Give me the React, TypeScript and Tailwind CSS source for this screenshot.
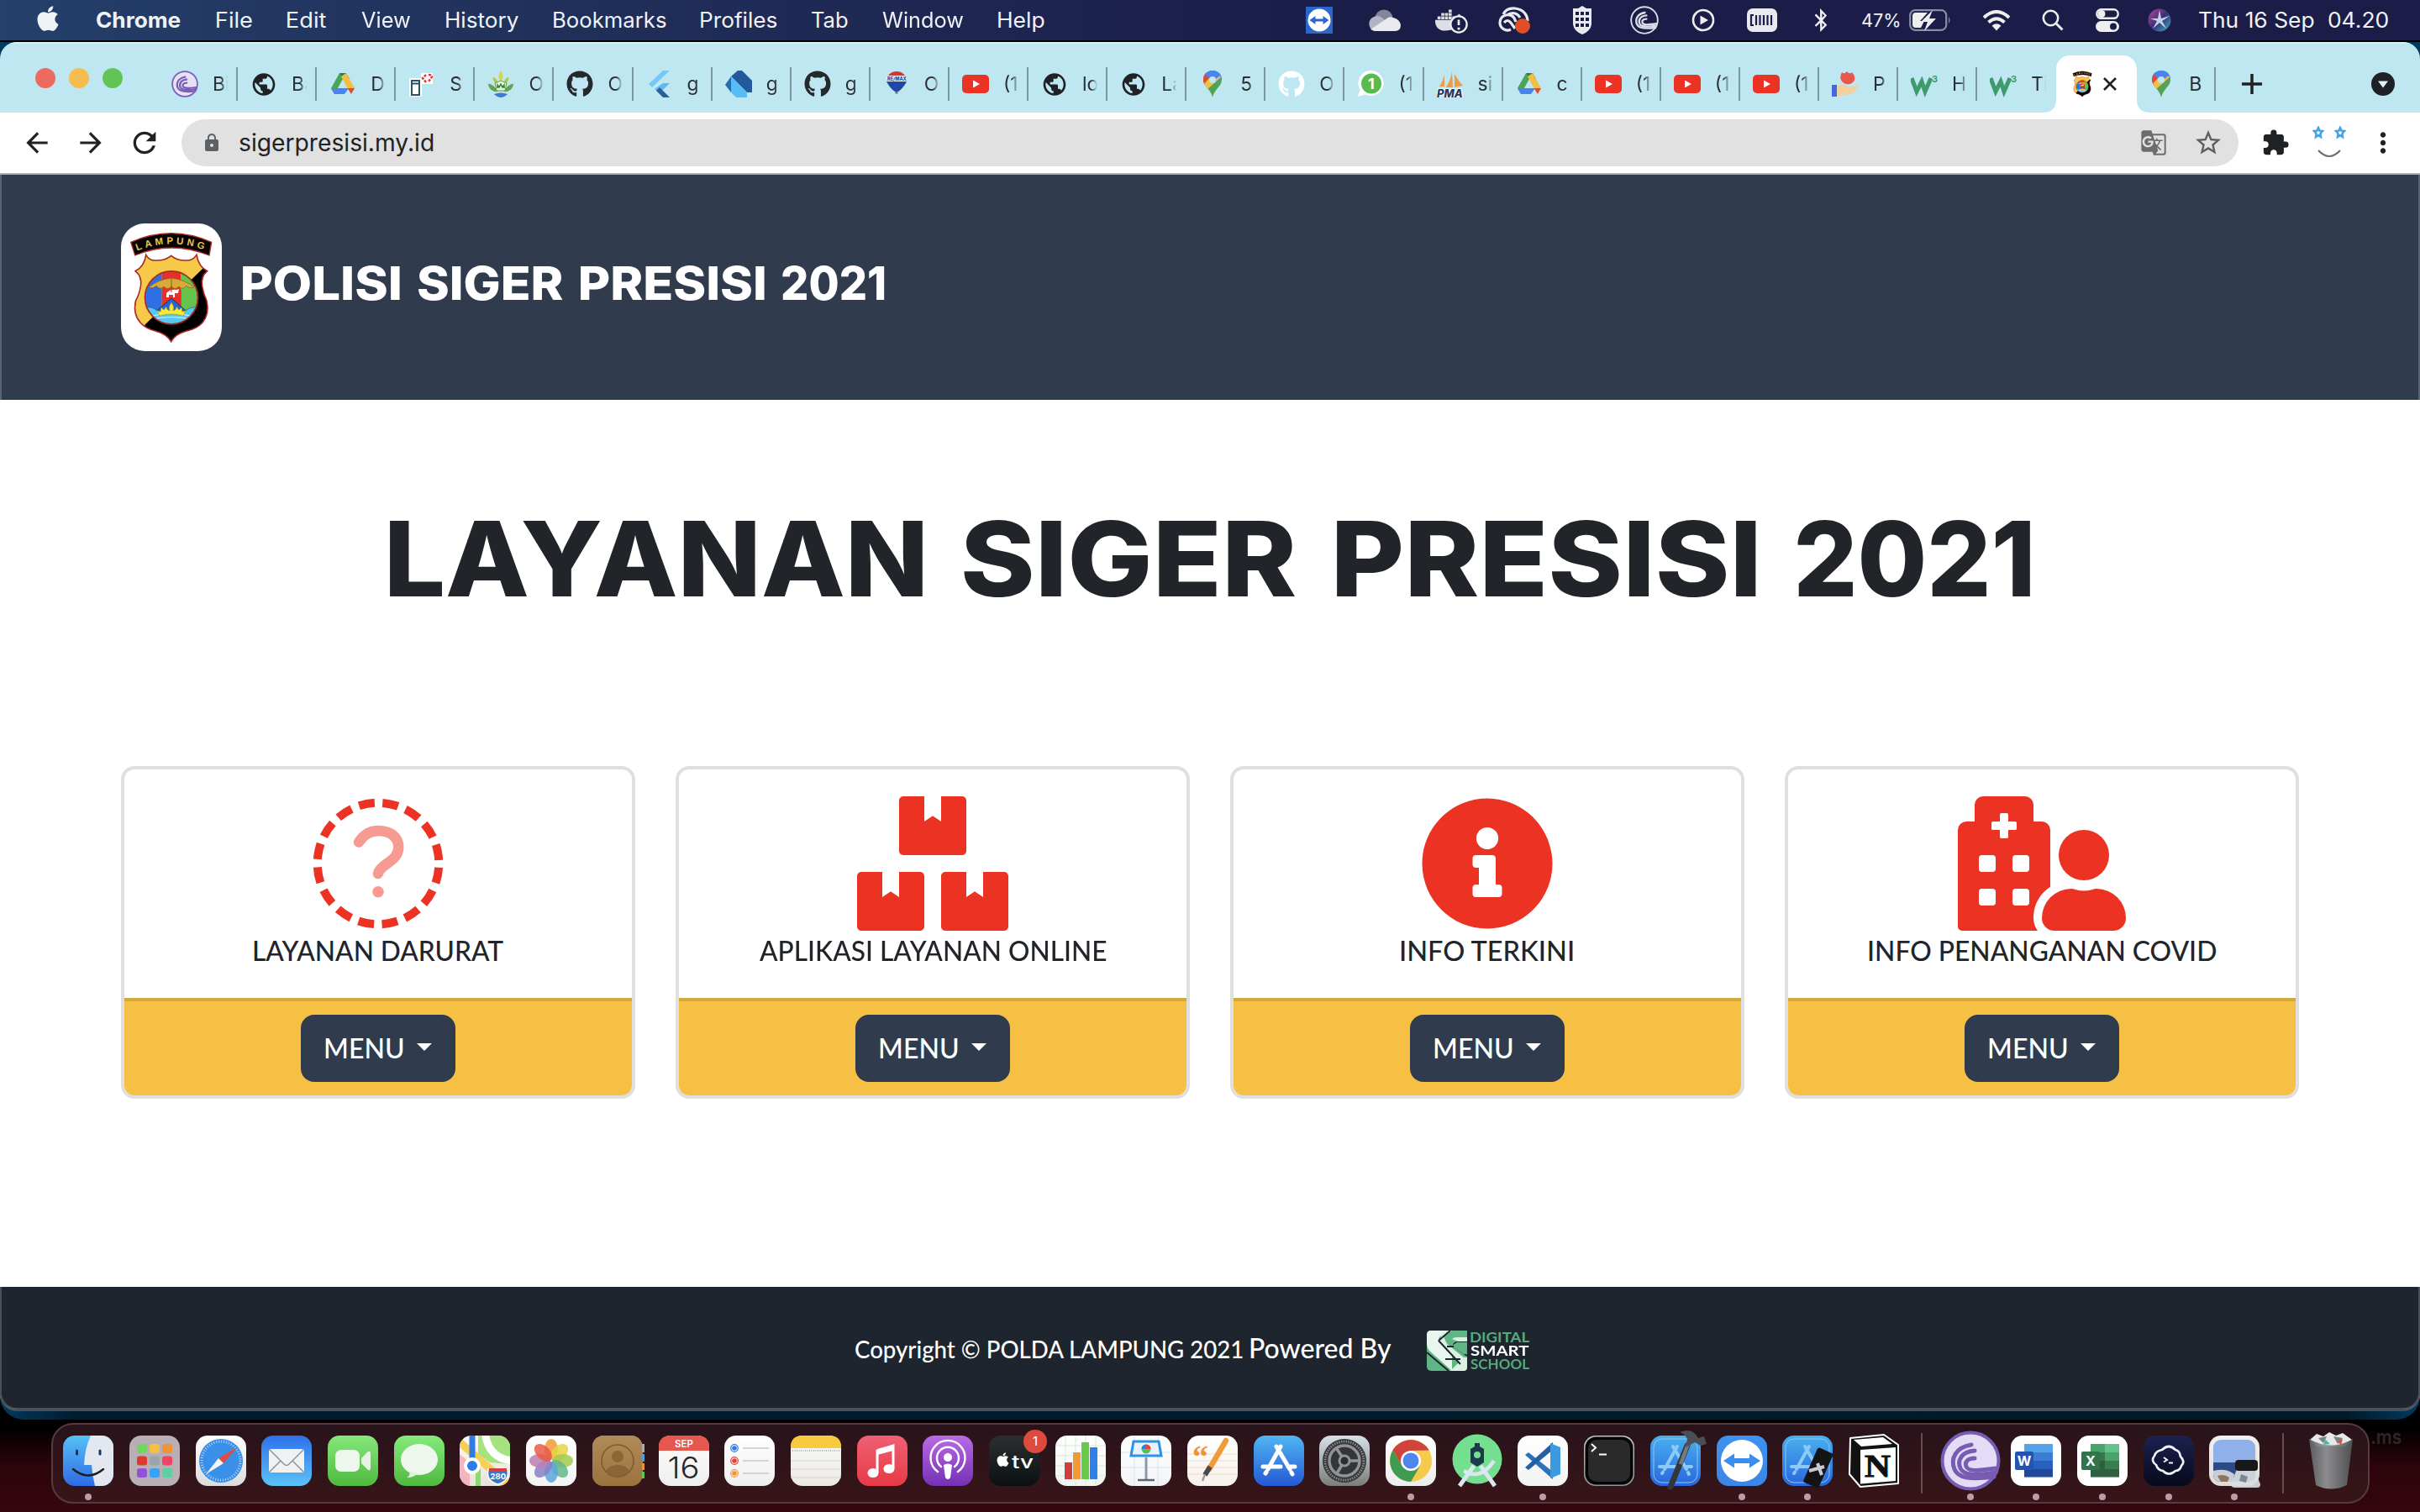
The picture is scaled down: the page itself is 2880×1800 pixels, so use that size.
import React, { useLayoutEffect, useRef } from "react";
import { FaApple, FaBluetoothB, FaBoxes, FaDocker, FaGithub, FaHospitalUser, FaInfoCircle } from "react-icons/fa";
import { MdArrowBack, MdArrowForward, MdExtension, MdGTranslate, MdLock, MdMoreVert, MdPublic, MdRefresh, MdStarBorder } from "react-icons/md";

/* Text whose inked width is fitted to an exact number of pixels. */
function Fit({ w, className = "", children }: { w: number; className?: string; children: string }) {
  const ref = useRef<HTMLSpanElement>(null);
  useLayoutEffect(() => {
    const el = ref.current;
    const ctx = document.createElement("canvas").getContext("2d");
    if (!el || !ctx) return;
    const cs = getComputedStyle(el);
    ctx.font = `${cs.fontWeight} ${cs.fontSize} ${cs.fontFamily}`;
    const m = ctx.measureText(children);
    const s = w / (m.actualBoundingBoxLeft + m.actualBoundingBoxRight);
    el.style.transform = `translateX(${m.actualBoundingBoxLeft * s}px) scaleX(${s})`;
  }, [w, children]);
  return (
    <span className={`inline-block whitespace-nowrap ${className}`} style={{ width: w }}>
      <span ref={ref} className="inline-block origin-left">{children}</span>
    </span>
  );
}

/* ---------- shared marks ---------- */
function Crest({ box = "0 0 120 152", className = "" }: { box?: string; className?: string }) {
  const shield =
    "M29.7 37.3 Q34 44.5 41 44 Q52 44.5 59.7 38.3 Q67 44.5 78 44 Q86 44 90 37.3 Q92 51 102.7 56.7 Q95 63 96.5 74 Q98 84 102 92 Q105.500 108 97 118 Q91 125 78 128 Q64 132 59.700 140.700 Q55 132 41 128 Q29 125 23 118 Q14 108 17.500 92 Q22 84 23.500 74 Q25 63 17 56.700 Q28 51 29.700 37.300 Z";
  return (
    <svg viewBox={box} className={className}>
      <defs>
        <clipPath id="sh"><path d={shield} /></clipPath>
        <clipPath id="ci"><circle cx="60" cy="88.300" r="31" /></clipPath>
        <path id="arc" d="M19 32.500 Q60 16.500 102 32.500" />
      </defs>
      <path d="M11.700 22.300 Q59.700 1 107.700 22.300 L105 38 Q59.700 20 16.700 38 Z" fill="#050303" stroke="#b3312a" strokeWidth="1.300" />
      <text fontFamily="Liberation Sans" fontWeight="700" fontSize="11.500" fill="#e8c64a" textLength="81">
        <textPath href="#arc" textLength="81">LAMPUNG</textPath>
      </text>
      <path d={shield} fill="#f7c948" />
      <path d="M97 54 L28.300 120.700 L28 145 H110 V50 Z" fill="#000" clipPath="url(#sh)" />
      <path d={shield} fill="none" stroke="#a82a24" strokeWidth="1.600" />
      <g clipPath="url(#ci)">
        <path d="M25 50h23.700v75H25z" fill="#2f6fe4" />
        <path d="M48.700 50h22.600v75H48.700z" fill="#e8302a" />
        <path d="M71.300 50H95v75H71.300z" fill="#66c44d" />
        <path d="M60 89 L38 108 H82 Z" fill="#2663d9" stroke="#123" strokeWidth=".7" />
        <path d="M25 102 Q34 97 42 103 Q60 112 78 103 Q86 97 95 102 V125 H25Z" fill="#56c8f5" stroke="#1b4d7a" strokeWidth=".6" />
        <path d="M38 110 Q60 104 82 110 M36 114 Q60 109 84 114" stroke="#fff" strokeWidth=".8" fill="none" />
      </g>
      <path d="M54 88 v-5 q5-5 12-4 l3-1 -1 5 -4 0 v5 h-2 v-3 h-5 v3z" fill="#fff" />
      <path d="M60 94 q4 5 2 10 q4-1 4-5 l3 4 3-3 1 5 4-1 -3 6 q-14-4-28 0 l-3-6 4 1 1-5 3 3 3-4 q0 4 4 5 q-2-5 2-10z" fill="#f6e93a" stroke="#9a8a16" strokeWidth=".6" />
      <path d="M60 65 Q76 67 87 76 Q80 78 78 74 Q73 80 69 75 Q64 80 60 75 Q55 80 51 75 Q46 80 42 74 Q39 78 33 76 Q44 67 60 65 Z" fill="#d9a93a" stroke="#86651a" strokeWidth=".7" />
      <path d="M60 63 V82" stroke="#86651a" strokeWidth="1" />
      <circle cx="60" cy="88.300" r="31.500" fill="none" stroke="#a82a24" strokeWidth="1.700" />
    </svg>
  );
}

const BitSwirl = ({ bg, fg, className }: { bg: string; fg: string; className: string }) => (
  <svg viewBox="0 0 72 72" className={className}>
    <circle cx="36" cy="36" r="33.500" fill={bg} stroke={fg} strokeWidth="4" />
    <g fill="none" stroke={fg} strokeWidth="5" strokeLinecap="round">
      <path d="M37 17 C18 20 12 34 17 46 C21 56 34 59 64 55" />
      <path d="M41 24 C25 25 20 36 24 45 C28 53 40 54 66 50" />
      <path d="M41 33 C32 33 29 38 31 43 C34 49 44 48 66 45" />
    </g>
  </svg>
);

/* ---------- tab favicons ---------- */
const Drive = () => (
  <svg viewBox="0 0 32 32" className="size-8">
    <path d="M12 3 L16 10 L6 28 L2 21 Z" fill="#4aa557" />
    <path d="M12 3 H20 L24 10 L16 10 Z" fill="#2e7d3c" />
    <path d="M20 3 L30 21 H21.500 L14 7 Z" fill="#f3be42" />
    <path d="M2 21 H23 L18 28 H6 Z" fill="#4c84ee" />
    <path d="M21.500 21 H30 L26 28 Z" fill="#df4a3c" />
  </svg>
);
const Globe = () => <MdPublic className="size-[33px] text-[#1f2124]" />;
const Git = () => <FaGithub className="size-8 text-[#24292e]" />;
const GitWhite = () => <FaGithub className="size-8 text-white" />;
const Tube = () => (
  <svg viewBox="0 0 32 32" className="size-8"><rect y="5" width="32" height="22" rx="5" fill="#ea3323" /><path d="M13 11.500 L21 16 L13 20.500Z" fill="#fff" /></svg>
);
const Pin = () => (
  <svg viewBox="0 0 32 32" className="size-8">
    <defs><clipPath id="pinc"><path d="M16 0 C9 0 5 5 5 11 C5 19 14 22 16 32 C18 22 27 19 27 11 C27 5 23 0 16 0Z" /></clipPath></defs>
    <g clipPath="url(#pinc)">
      <rect width="32" height="32" fill="#52a455" />
      <path d="M0 0 H32 V6 L20 14 L12 8 L5 4Z" fill="#4b84ee" />
      <path d="M0 4 L7 4 L13 10 L5 20 L0 20Z" fill="#df4a3c" />
      <path d="M4 18 L20 0 L26 8 L9 23Z" fill="#f6be43" />
      <path d="M7 3 L16 0 L32 0 L20 10 L12 9Z" fill="#4b84ee" />
    </g>
    <circle cx="16" cy="11" r="4" fill="#bfe7f1" />
  </svg>
);
const W3 = () => (
  <svg viewBox="0 0 32 32" className="size-8">
    <path d="M1 9 L7 25 L13 13 L17 25 L24 9" fill="none" stroke="#3f9a6d" strokeWidth="5" />
    <text x="25" y="14" fontSize="11" fontFamily="Inter" fontWeight="700" fill="#3f9a6d">3</text>
  </svg>
);
const DbIcon = () => (
  <svg viewBox="0 0 32 32" className="size-8">
    <rect x="1" y="9" width="15" height="22" fill="#fff" />
    <path d="M4 12 h9 v17 h-9z M4 15.500h9" fill="#fff" stroke="#2b5460" strokeWidth="2" />
    <rect x="15" y="3" width="14" height="13" fill="#fff" />
    <path d="M21 5 l-4 4 4 5 M24 5 q6 0 3 4 l-3 4" fill="none" stroke="#e0302a" strokeWidth="2.400" strokeDasharray="3 1.500" />
  </svg>
);
const Lotus = () => (
  <svg viewBox="0 0 32 32" className="size-8">
    <path d="M16 0 q5 7 0 13 q-5-6 0-13z" fill="#cfd84a" />
    <g fill="#a9c94c" stroke="#dfeecb" strokeWidth=".7"><path d="M6 7q7 2 8 12q-8-4-8-12z" /><path d="M26 7q-7 2-8 12q8-4 8-12z" /></g>
    <g fill="#5da35e" stroke="#dfeecb" strokeWidth=".7"><path d="M0 15q9 1 13 11q-11 0-13-11z" /><path d="M32 15q-9 1-13 11q11 0 13-11z" /></g>
    <path d="M9 15 L16 12 L23 15 L21 24 H11Z" fill="#eef4d6" stroke="#5a9d45" />
    <path d="M12 21v-4l2 3 2-4 2 4 2-3v4" fill="none" stroke="#2e7d3c" strokeWidth="1.400" />
    <path d="M8 28q8-3 16 0q-4 4-8 4t-8-4z" fill="#3b7bd0" />
  </svg>
);
const Flutter = () => (
  <svg viewBox="0 0 32 32" className="size-8"><path d="M20 0 H28 L7 20 L3 16Z" fill="#74c8f7" /><path d="M20 15 H28 L16 27 L10 22Z" fill="#5cb9f5" /><path d="M12 24 L16 20 L28 32 H20Z" fill="#2a5f9e" /></svg>
);
const Dart = () => (
  <svg viewBox="0 0 32 32" className="size-8"><path d="M7 7 L15 0 H20 L32 12 V26 H26Z" fill="#23599b" /><path d="M7 7 L0 17 L7 26Z" fill="#2c6ab0" /><path d="M7 7 L26 26 V32 H13 L7 26Z" fill="#58bdf6" /></svg>
);
const Balloon = () => (
  <svg viewBox="0 0 32 32" className="size-8">
    <path d="M4 12a12 11 0 0 1 24 0z" fill="#d8342c" /><rect x="4" y="6" width="24" height="7" rx="3" fill="#f4f6fa" />
    <text x="5" y="12" fontSize="5.500" fontFamily="Inter" fontWeight="800" fill="#1b48a0">RE/MAX</text>
    <path d="M4 13 H28 Q24 21 18 25 H14 Q8 21 4 13Z" fill="#2048a4" /><path d="M14.500 25h3v2.500h-3z" fill="#6b7280" />
  </svg>
);
const Whats = () => (
  <svg viewBox="0 0 32 32" className="size-8">
    <path d="M17 0a15 15 0 1 1-7 28.500L1 31l2.500-8.500A15 15 0 0 1 17 0z" fill="#fff" /><circle cx="17" cy="15.500" r="12" fill="#57bb4f" />
    <text x="13" y="22" fontSize="18" fontFamily="Inter" fontWeight="700" fill="#fff">1</text>
  </svg>
);
const Pma = () => (
  <svg viewBox="0 0 32 32" className="size-8">
    <path d="M3 19 Q7 13 9 5 L9 19Z M11 20 Q17 10 18 0 L19 20Z M21 20 V4 Q27 14 31 18Z" fill="#ee9c45" />
    <text x="0" y="31.500" fontSize="13" fontFamily="Inter" fontStyle="italic" fontWeight="800" fill="#2d3263" stroke="#fff" strokeWidth="2" paintOrder="stroke">PMA</text>
  </svg>
);
const Hand = () => (
  <svg viewBox="0 0 32 32" className="size-8">
    <path d="M12 2q3 3 6-1q3 4 6 1q7 8 0 13q-6 3-11-1q-5-5-1-12z" fill="#e9564e" /><path d="M6 18 Q16 14 20 19 L31 18 Q28 28 18 29 L6 31Z" fill="#f1d0a2" /><path d="M0 17h6v14H0z" fill="#4169e4" />
  </svg>
);
const Bit = () => <BitSwirl bg="#e7e1f5" fg="#7a5fb5" className="size-8" />;

const TABS: [() => React.ReactElement, string][] = [
  [Bit, "Bi"], [Globe, "Ba"], [Drive, "D"], [DbIcon, "S"], [Lotus, "O"], [Git, "O"], [Flutter, "g"], [Dart, "g"],
  [Git, "g"], [Balloon, "O"], [Tube, "(1"], [Globe, "lo"], [Globe, "La"], [Pin, "5"], [GitWhite, "O"], [Whats, "(1"],
  [Pma, "si"], [Drive, "c"], [Tube, "(1"], [Tube, "(1"], [Tube, "(1"], [Hand, "P"], [W3, "H"], [W3, "Ti"],
];

function TabStrip() {
  return (
    <div className="flex h-[84px] shrink-0 border-t-2 border-[#d6f1f7] bg-[#bfe7f1] pt-[14px]">
      <div className="flex w-[189px] shrink-0 gap-4 pl-[42px] pt-[15px]">
        <i className="size-6 rounded-full bg-[#ed6a5e]" />
        <i className="size-6 rounded-full bg-[#f5bd4f]" />
        <i className="size-6 rounded-full bg-[#61c454]" />
      </div>
      {TABS.map(([Icon, t], i) => (
        <div key={i} className="flex h-[68px] w-[94.100px] shrink-0 items-center">
          <span className="ml-[15px] flex w-8 justify-center"><Icon /></span>
          <span className="ml-[17px] w-[18px] overflow-hidden whitespace-nowrap font-[Inter] text-[23px] text-[#2b2f33] [mask-image:linear-gradient(90deg,#000_55%,transparent)]">{t}</span>
          {i < 23 && <i className="ml-auto h-10 w-0.5 bg-[#7d979f]" />}
        </div>
      ))}
      <div className="relative flex h-[68px] w-24 shrink-0 items-center rounded-t-2xl bg-white">
        <svg viewBox="0 0 16 16" className="absolute -left-4 bottom-0 size-4"><path d="M16 0 V16 H0 Q16 16 16 0Z" fill="#fff" /></svg>
        <svg viewBox="0 0 16 16" className="absolute -right-4 bottom-0 size-4"><path d="M0 0 V16 H16 Q0 16 0 0Z" fill="#fff" /></svg>
        <Crest box="8 8 103 136" className="ml-[15px] h-8 w-8" />
        <svg viewBox="0 0 16 16" className="ml-[9px] size-4"><path d="M1 1 L15 15 M15 1 L1 15" stroke="#1f2124" strokeWidth="2.600" /></svg>
      </div>
      <div className="flex h-[68px] w-[94px] shrink-0 items-center">
        <span className="ml-[13px]"><Pin /></span>
        <span className="ml-[17px] w-[18px] font-[Inter] text-[23px] text-[#2b2f33]">B</span>
        <i className="ml-auto h-10 w-0.5 bg-[#7d979f]" />
      </div>
      <div className="flex h-[68px] grow items-center justify-between pl-[31px] pr-[30px]">
        <svg viewBox="0 0 24 24" className="size-6"><path d="M12 0 V24 M0 12 H24" stroke="#1f2124" strokeWidth="3.500" /></svg>
        <svg viewBox="0 0 28 28" className="size-7"><circle cx="14" cy="14" r="14" fill="#1f2124" /><path d="M8 10.500 H20 L14 18.500Z" fill="#dff4f9" /></svg>
      </div>
    </div>
  );
}

function Toolbar() {
  return (
    <div className="flex h-[74px] shrink-0 items-center border-b-2 border-[#acb0b3] bg-white text-[#1f2124]">
      <MdArrowBack className="ml-[25px] size-[38px]" />
      <MdArrowForward className="ml-[26px] size-[38px]" />
      <MdRefresh className="ml-[25px] size-10" />
      <div className="ml-6 flex h-14 w-[2448px] items-center rounded-full bg-[#e1e1e1]">
        <MdLock className="ml-[24px] size-6 text-[#5d6065]" />
        <span className="ml-[21px] font-[Inter] text-[28px] leading-10 text-[#202124]"><Fit w={230}>sigerpresisi.my.id</Fit></span>
        <MdGTranslate className="ml-auto size-8 text-[#6a6d70]" />
        <MdStarBorder className="ml-[31px] mr-[18px] size-[36px] text-[#5d6065]" />
      </div>
      <MdExtension className="ml-[27px] size-[34px]" />
      <svg viewBox="0 0 40 40" className="ml-[27px] size-10">
        <g fill="none" stroke="#4ba3e0" strokeWidth="2.600">
          <path d="M7 2 l1.500 3.500 3.500 .5 -2.500 3 .5 4 -3-2 -3 2 .5-4 -2.500-3 3.500-.5z" />
          <path d="M33 2 l1.500 3.500 3.500 .5 -2.500 3 .5 4 -3-2 -3 2 .5-4 -2.500-3 3.500-.5z" />
        </g>
        <path d="M7 29 Q20 43 33 29" fill="none" stroke="#6b6e72" strokeWidth="2.200" />
      </svg>
      <MdMoreVert className="ml-[25px] size-[38px]" />
    </div>
  );
}

/* ---------- macOS menu bar ---------- */
const MENUS: [string, string, number][] = [
  ["File", "w-[84px]", 42], ["Edit", "w-[88px]", 46], ["View", "w-[101px]", 58], ["History", "w-[128px]", 86], ["Bookmarks", "w-[175px]", 134],
  ["Profiles", "w-[132px]", 91], ["Tab", "w-[84px]", 43], ["Window", "w-[138px]", 96], ["Help", "w-[90px]", 55],
];

function MenuBar() {
  return (
    <div className="flex h-12 shrink-0 items-center bg-[linear-gradient(90deg,#24406b_0%,#213560_14%,#1e2a55_33%,#1b1d49_55%,#1b1c48_100%)] font-[Inter] text-[25.500px] leading-[30px] text-[#f1f2f6]">
      <FaApple className="mb-1 ml-[40px] size-[34px]" />
      <span className="ml-[41px] w-[143px] font-bold"><Fit w={100}>Chrome</Fit></span>
      {MENUS.map(([t, w, ink]) => <span key={t} className={w}><Fit w={ink}>{t}</Fit></span>)}
      <svg viewBox="0 0 32 32" className="ml-[276px] size-8"><rect width="32" height="32" fill="#2a66cc" /><circle cx="16" cy="16" r="13.500" fill="#fff" /><path d="M4.500 16 l7-5 v3.500 h9 V11 l7 5 -7 5 v-3.500 h-9 V21z" fill="#2a66cc" /></svg>
      <svg viewBox="0 0 40 26" className="ml-[41px] h-[26px] w-10"><circle cx="20" cy="11" r="10.500" fill="#83859d" /><path d="M9 26 a9 9 0 0 1-1-17 q6-3 11 2 L33 26Z" fill="#b2b3c4" /><path d="M4 24 L22 12 Q26 8 31 10 q8 2 9 9 q0 7-7 7 H9z" fill="#e9e9f0" /></svg>
      <span className="relative ml-[41px] flex h-8 w-10 items-center">
        <FaDocker className="size-9 text-[#dcdde6]" />
        <svg viewBox="0 0 24 24" className="absolute left-[17px] top-[10px] size-[22px]"><circle cx="12" cy="12" r="10.500" fill="#1b1c48" stroke="#eee" strokeWidth="2.500" /><path d="M12 6v7M12 16v3" stroke="#eee" strokeWidth="3" /></svg>
      </span>
      <svg viewBox="0 0 40 32" className="ml-[33px] h-8 w-10"><g fill="none" stroke="#e9e9f0" strokeWidth="3.200"><path d="M17 27 a9 9 0 0 1-13-8 q0-7 7-9 q9-2 12 8 M9 19 q4-5 8 0 l5 7" /><path d="M8 9 Q12 1 22 2 Q36 4 37 17 M14 9 q9-4 14 4" /></g><circle cx="31" cy="23" r="9" fill="#dd4f27" /></svg>
      <svg viewBox="0 0 28 34" className="ml-[48px] h-[34px] w-7"><path d="M3 3 H9 L14 0 L19 3 H25 V22 Q24 30 14 34 Q4 30 3 22Z" fill="#e9e9f0" /><g fill="#1b1c48"><path d="M6 7h4v4H6zM12 7h4v4h-4zM18 7h4v4h-4zM6 14h4v4H6zM12 14h4v4h-4zM18 14h4v4h-4zM6 21h4v4H6zM12 21h4v4h-4zM18 21h4v4h-4z" /></g></svg>
      <BitSwirl bg="#1b1c48" fg="#dcdde6" className="ml-[43px] size-[34px]" />
      <svg viewBox="0 0 28 28" className="ml-[39px] size-7"><circle cx="14" cy="14" r="12" fill="none" stroke="#eee" strokeWidth="2.600" /><path d="M10.500 8.500 L20 14 L10.500 19.500Z" fill="#eee" /></svg>
      <svg viewBox="0 0 36 28" className="ml-[38px] h-7 w-9"><rect width="36" height="28" rx="7" fill="#e9e9f0" /><path d="M8 8H5v12h3M11 8v12M15.500 8v12M20 8v12M24.500 8v12M29 8v12" fill="none" stroke="#1b1c48" strokeWidth="2.200" /></svg>
      <FaBluetoothB className="ml-[38px] size-[28px]" />
      <span className="ml-[35px] text-[22px]"><Fit w={45}>47%</Fit></span>
      <svg viewBox="0 0 50 26" className="ml-[11px] h-[26px] w-[50px]"><rect x="1.200" y="1.200" width="43" height="23.600" rx="6" fill="none" stroke="#8b8ca8" strokeWidth="2.200" /><path d="M8 4 H22 L13 14 H18 L14 22 H8 Q4 22 4 18 V8 Q4 4 8 4Z" fill="#eee" /><path d="M28 1 L14 15 H22 L18 26 L32 11 H24Z" fill="#eee" /><path d="M47 9 q3 4 0 8z" fill="#8b8ca8" /></svg>
      <svg viewBox="0 0 34 25" className="ml-[37px] h-[25px] w-[34px]"><path d="M2 9 Q17 -5 32 9 M7.500 14.500 Q17 6 26.500 14.500" fill="none" stroke="#eee" strokeWidth="4" /><path d="M11.500 18.500 Q17 14 22.500 18.500 L17 24.500Z" fill="#eee" /></svg>
      <svg viewBox="0 0 26 26" className="ml-[37px] size-[26px]"><circle cx="10.500" cy="10.500" r="8.700" fill="none" stroke="#eee" strokeWidth="2.600" /><path d="M17 17 L24.500 24.500" stroke="#eee" strokeWidth="3" /></svg>
      <svg viewBox="0 0 28 28" className="ml-[38px] size-7"><rect x="1.300" y="1.300" width="25.400" height="10.500" rx="5.200" fill="none" stroke="#eee" strokeWidth="2.400" /><circle cx="7" cy="6.500" r="4.500" fill="#eee" /><rect y="15" width="28" height="13" rx="6.500" fill="#eee" /><circle cx="21" cy="21.500" r="4" fill="#1b1c48" /></svg>
      <svg viewBox="0 0 28 28" className="ml-[34px] size-7"><defs><linearGradient id="siri" x1="0" y1="0" x2="1" y2="1"><stop stopColor="#b8479a" /><stop offset=".5" stopColor="#3b2f7a" /><stop offset="1" stopColor="#38b2c8" /></linearGradient></defs><circle cx="14" cy="14" r="13.500" fill="url(#siri)" /><path d="M14 2 L16 12 L26 9 L17 15 L22 24 L14 17 L6 24 L11 15 L3 12 L12 12Z" fill="#dceefa" opacity=".85" /></svg>
      <span className="ml-[33px]"><Fit w={137}>Thu 16 Sep</Fit></span>
      <span className="ml-[17px]"><Fit w={71}>04.20</Fit></span>
    </div>
  );
}

/* ---------- page ---------- */
const DashedQuestion = () => (
  <svg viewBox="0 0 160 160" className="size-40">
    <circle cx="80" cy="80" r="72.300" fill="none" stroke="#ec3323" strokeWidth="10" strokeDasharray="18.800 9.592" strokeDashoffset="-4.800" />
    <path d="M57 54.500 Q66 41 80 41 C95 41 104.300 49 104.300 60.500 C104.300 70 98 75 90 80.500 C83 85.500 80.500 89 80 92" fill="none" stroke="#f79a92" strokeWidth="12.500" strokeLinecap="round" strokeLinejoin="round" />
    <circle cx="80" cy="113.700" r="6.800" fill="#f79a92" />
  </svg>
);

const SERVICES: [string, number, React.ReactElement][] = [
  ["LAYANAN DARURAT", 297, <DashedQuestion />],
  ["APLIKASI LAYANAN ONLINE", 413, <FaBoxes className="h-40 w-[180px]" />],
  ["INFO TERKINI", 206, <FaInfoCircle className="size-40" />],
  ["INFO PENANGANAN COVID", 413, <FaHospitalUser className="h-40 w-[200px]" />],
];

function ServiceCard({ label, width, icon }: { label: string; width: number; icon: React.ReactElement }) {
  return (
    <div className="flex h-[396px] w-[612px] flex-col overflow-hidden rounded-2xl border-4 border-[#dfdfdf] bg-white">
      <div className="flex grow flex-col items-center pt-8 text-[#ec3323]">
        {icon}
        <p className="text-[32px] font-medium leading-[48px] text-[#212529]"><Fit w={width}>{label}</Fit></p>
      </div>
      <div className="flex h-[116px] items-start justify-center border-t-4 border-[#d4a93b] bg-[#f6c044] pt-4">
        <button className="flex h-20 w-[184px] items-center rounded-2xl bg-[#303c4e] pl-[29px] text-[32px] font-medium leading-[48px] text-white">
          <Fit w={93} className="mr-4 text-left">MENU</Fit>
          <svg viewBox="0 0 18 9" className="-mt-1 h-[9px] w-[18px]"><path d="M0 0 H18 L9 9Z" fill="#fff" /></svg>
        </button>
      </div>
    </div>
  );
}

function SchoolLogo() {
  return (
    <div className="flex h-12 w-[122px] gap-1">
      <svg viewBox="0 0 48 48" className="size-12">
        <rect width="48" height="48" rx="5" fill="#5fb584" />
        <path d="M5 0 H24 L14 9 L30 26 V48 L3 24 Q0 20 0 16 V5 Q0 0 5 0Z" fill="#e8f6ee" />
        <path d="M20 0 L48 0 V14 H40 L30 10 L24 16 L44 32 H48 V44 Q48 48 44 48 H28 L38 38 L14 14Z" fill="#d9f0e2" />
        <path d="M20 7 L30 0 H48 V8 H36 Q30 8 28 13 L24 16Z" fill="#5fb584" />
        <path d="M48 14 H38 Q32 14 32 18 L48 30" fill="none" stroke="#1d252e" strokeWidth="2" />
        <path d="M48 14 H36 L30 18 L44 28 L48 28Z" fill="#5fb584" />
        <path d="M14 12 L28 0 M14 12 L40 40 M22 34 H40 M0 26 L26 48 M24 19 L32 19" stroke="#1d252e" strokeWidth="2" fill="none" />
      </svg>
      <div className="flex flex-col justify-between font-[Lato] text-[17.500px] font-bold leading-4">
        <span className="text-[#55a97a]"><Fit w={70}>DIGITAL</Fit></span>
        <span className="text-white"><Fit w={70}>SMART</Fit></span>
        <span className="text-[#55a97a]"><Fit w={70}>SCHOOL</Fit></span>
      </div>
    </div>
  );
}

function Page() {
  return (
    <div className="flex grow flex-col bg-white font-[Lato,sans-serif]">
      <header className="flex h-[268px] shrink-0 items-start bg-[#303c4e] pl-36 pt-[58px]">
        <div className="h-[152px] w-[120px] shrink-0 rounded-[28px] bg-white"><Crest className="h-[152px] w-[120px]" /></div>
        <h2 className="ml-[25px] mt-[35px] flex gap-[21px] font-[Inter] text-[55px] font-extrabold leading-[72px] text-white">
          <Fit w={187}>POLISI</Fit><Fit w={173}>SIGER</Fit><Fit w={219}>PRESISI</Fit><Fit w={122}>2021</Fit>
        </h2>
      </header>
      <main className="flex h-[1056px] shrink-0 flex-col items-center pt-[117px]">
        <h1 className="flex gap-[49.500px] font-[Inter] text-[124px] font-extrabold leading-[144px] text-[#212529]">
          <Fit w={634}>LAYANAN</Fit><Fit w={394}>SIGER</Fit><Fit w={499}>PRESISI</Fit><Fit w={277}>2021</Fit>
        </h1>
        <div className="mt-[175px] flex gap-12">
          {SERVICES.map(([label, width, icon]) => <ServiceCard key={label} label={label} width={width} icon={icon} />)}
        </div>
      </main>
      <footer className="flex grow items-start bg-[#1e252e] pl-[1018px] pt-[52px] text-white">
        <p className="-mt-[3px] flex w-[680px] items-baseline text-[32px] font-medium leading-[48px]">
          <Fit w={462} className="mr-2 text-[28px]">Copyright © POLDA LAMPUNG 2021</Fit>
          <Fit w={168}>Powered By</Fit>
        </p>
        <SchoolLogo />
      </footer>
    </div>
  );
}

/* ---------- dock ---------- */
const Tile = ({ id, from, to, children }: { id: string; from: string; to: string; children?: React.ReactNode }) => (
  <svg viewBox="0 0 60 60" className="size-[60px] overflow-visible">
    <defs>
      <linearGradient id={`g${id}`} x1="0" y1="0" x2="0" y2="1"><stop stopColor={from} /><stop offset="1" stopColor={to} /></linearGradient>
      <clipPath id={`c${id}`}><rect width="60" height="60" rx="14" /></clipPath>
    </defs>
    <rect width="60" height="60" rx="14" fill={`url(#g${id})`} />
    {children}
  </svg>
);
const A = ({ c = "#fff", w = 5 }: { c?: string; w?: number }) => (
  <g stroke={c} strokeWidth={w} strokeLinecap="round" fill="none"><path d="M32 13 L17 40 M27 13 L43 40 M11 37 H32 M41 37 H49 M14 45 L15 43.500 M46 46 L45 44" /></g>
);
const PHOTO = ["#f19a37", "#e8d53f", "#a5c94c", "#63b889", "#5ea5dc", "#8880c8", "#bb7fb0", "#e85a48"];
const PAD = ["#6fd85c", "#f5c142", "#ee9433", "#da3a2f", "#9aa4ab", "#ee4561", "#9352d6", "#38a3f5", "#5cd0a4"];

const APPS: { name: string; run?: boolean; icon: React.ReactElement }[] = [
  { name: "Finder", run: true, icon: (
    <Tile id="fi" from="#55c0f7" to="#2f6be6"><g clipPath="url(#cfi)"><path d="M33 0 Q26 14 25 35 H34 Q35 48 38 60 H60 V0Z" fill="#e3e8f0" /></g><path d="M16.500 18v4M44 18v4" stroke="#16365f" strokeWidth="3" strokeLinecap="round" /><path d="M12 40 Q30 55 48 40" fill="none" stroke="#1c1c22" strokeWidth="2.400" strokeLinecap="round" /></Tile>) },
  { name: "Launchpad", icon: (
    <Tile id="lp" from="#b8aeb4" to="#b9b0b6">{PAD.map((c, i) => <rect key={i} x={9 + (i % 3) * 15} y={10 + Math.floor(i / 3) * 14.500} width="12" height="11" rx="3" fill={c} />)}</Tile>) },
  { name: "Safari", icon: (
    <Tile id="sf" from="#fff" to="#dcdcdc"><circle cx="30" cy="30" r="26" fill="#3a8fe8" /><circle cx="30" cy="30" r="23" fill="none" stroke="#cfe6fb" strokeWidth="3" strokeDasharray=".8 2.200" /><path d="M49 14 L33 33 L27 27Z" fill="#e8493c" /><path d="M12 46 L27 27 L33 33Z" fill="#f4f4f4" /></Tile>) },
  { name: "Mail", icon: (
    <Tile id="ml" from="#3070ea" to="#5bc3f8"><rect x="9" y="16" width="42" height="28" rx="3" fill="#f0f1f3" /><path d="M10 17 L27 34 Q30 37 33 34 L50 17 M10 43 L23 30 M50 43 L37 30" fill="none" stroke="#8f959c" strokeWidth="1.500" /></Tile>) },
  { name: "FaceTime", icon: (
    <Tile id="ft" from="#85e87a" to="#4fb940"><rect x="9" y="17" width="29" height="26" rx="7" fill="#eef7ee" /><path d="M40 27 L48 19 Q51 18 51 21 V39 Q51 42 48 41 L40 33Z" fill="#e4f2e4" /></Tile>) },
  { name: "Messages", icon: (
    <Tile id="ms" from="#86ea7c" to="#4fb940"><ellipse cx="30" cy="28.500" rx="22" ry="18.500" fill="#eef7ee" /><path d="M18 42 Q20 47 15 50 Q24 50 28 45Z" fill="#dff0df" /></Tile>) },
  { name: "Maps", icon: (
    <Tile id="mp" from="#fbf8f0" to="#e8e4da"><g clipPath="url(#cmp)"><path d="M22 0H60V34L36 32L22 22Z" fill="#a6e37e" /><path d="M30 -4 Q34 28 64 30" fill="none" stroke="#fff" strokeWidth="9" /><path d="M0 8 L62 62" stroke="#f6cf55" strokeWidth="9" /><path d="M0 22 L12 32 V60 H0Z" fill="#f4b5c2" /><path d="M22 36 V60" stroke="#8ed870" strokeWidth="6" /><path d="M15 0 V36" stroke="#2f7ce8" strokeWidth="7" /></g><circle cx="15" cy="36" r="8" fill="#2f7ce8" stroke="#fff" strokeWidth="4" /><path d="M34 40 H57 Q60 54 45.500 58 Q31 54 34 40Z" fill="#3b77c8" stroke="#fff" strokeWidth="1.500" /><path d="M35 39 h21 v4 H35z" fill="#d83b3b" /><text x="36.500" y="52" fontSize="9.500" fontFamily="Inter" fontWeight="700" fill="#fff">280</text></Tile>) },
  { name: "Photos", icon: (
    <Tile id="ph" from="#fff" to="#f3f3f3">{PHOTO.map((c, i) => <ellipse key={c} cx="30" cy="16.500" rx="8" ry="12.500" fill={c} opacity=".85" transform={`rotate(${i * 45} 30 30)`} />)}</Tile>) },
  { name: "Contacts", icon: (
    <Tile id="ct" from="#b08a58" to="#9a733f"><path d="M60 10v10" stroke="#aaa" strokeWidth="4" /><path d="M60 22v9" stroke="#4aa3e0" strokeWidth="4" /><path d="M60 33v8" stroke="#ee9433" strokeWidth="4" /><path d="M60 43v8" stroke="#62c554" strokeWidth="4" /><rect width="59" height="60" rx="13" fill="url(#gct)" /><circle cx="30" cy="30" r="19" fill="none" stroke="#7c5a2e" strokeWidth="1.500" /><circle cx="30" cy="25" r="7" fill="#8a6536" /><path d="M16 43 Q19 35 30 35 Q41 35 44 43 Q30 54 16 43Z" fill="#8a6536" /></Tile>) },
  { name: "Calendar", icon: (
    <Tile id="ca" from="#fdfdfd" to="#efefef"><path d="M0 18 V14 Q0 0 14 0 H46 Q60 0 60 14 V18Z" fill="#e5584d" /><text x="30" y="14" fontSize="11.500" textAnchor="middle" fontFamily="Inter" fontWeight="600" fill="#fff">SEP</text><text x="29.500" y="51" fontSize="36" textAnchor="middle" fontFamily="Inter" fontWeight="300" fill="#26262a" textLength="38" lengthAdjust="spacingAndGlyphs">16</text></Tile>) },
  { name: "Reminders", icon: (
    <Tile id="re" from="#fff" to="#efefef">{["#2f77ea", "#e0453c", "#ee9433"].map((c, i) => <g key={c}><circle cx="12" cy={15 + i * 15} r="4.300" fill="none" stroke={c} strokeWidth="1.200" /><circle cx="12" cy={15 + i * 15} r="2.800" fill={c} /><path d={`M22 ${15 + i * 15}h31`} stroke="#c8c8c8" strokeWidth="1.500" /></g>)}</Tile>) },
  { name: "Notes", icon: (
    <Tile id="no" from="#fbfbf9" to="#ebe9e4"><path d="M0 15 V14 Q0 0 14 0 H46 Q60 0 60 14 V15Z" fill="#f8cb3f" /><path d="M2 18h57" stroke="#999" strokeWidth="1.500" strokeDasharray="1 1.500" /><path d="M0 30h60M0 40h60M0 50h60" stroke="#d6d4cf" /></Tile>) },
  { name: "Music", icon: (
    <Tile id="mu" from="#ef6074" to="#e63a45"><path d="M24 44 V18 L43 12 V39" fill="none" stroke="#fff" strokeWidth="3" /><path d="M24 16 L43 11 V18 L24 23Z" fill="#fff" /><ellipse cx="19" cy="44.500" rx="6.500" ry="5.500" fill="#fff" /><ellipse cx="38" cy="39.500" rx="6.500" ry="5.500" fill="#fff" /></Tile>) },
  { name: "Podcasts", icon: (
    <Tile id="po" from="#ba6be6" to="#7430b4"><circle cx="30" cy="26" r="5" fill="#fff" /><path d="M25 35 Q30 32 35 35 L33 50 Q30 54 27 50Z" fill="#fff" /><path d="M22 37 A13 13 0 1 1 38 37 M18 43 A20.500 20.500 0 1 1 42 43" fill="none" stroke="#fff" strokeWidth="2.400" strokeLinecap="round" /></Tile>) },
  { name: "TV", icon: (
    <Tile id="tv" from="#2b2f30" to="#0b1012"><FaApple x="7" y="19" width="19" height="19" fill="#fff" size={19} /><text x="27" y="38.500" fontSize="21" fontFamily="Inter" fontWeight="500" fill="#fff" textLength="26" lengthAdjust="spacingAndGlyphs">tv</text><circle cx="55" cy="7" r="14" fill="#dd4a3e" /><text x="55" y="12" fontSize="15" textAnchor="middle" fontFamily="Inter" fill="#fff">1</text></Tile>) },
  { name: "Numbers", icon: (
    <Tile id="nu" from="#fff" to="#f1f4f0"><path d="M0 12h60M0 24h60M0 36h60M0 48h60M12 0v60M24 0v60M36 0v60M48 0v60" stroke="#d5ebd3" /><path d="M11 32h9v20h-9z" fill="#cf3e3d" /><path d="M21 20h9v32h-9z" fill="#f09a38" /><path d="M31 8h9v44h-9z" fill="#66c94c" /><path d="M41 14h9v38h-9z" fill="#2f80e8" /></Tile>) },
  { name: "Keynote", icon: (
    <Tile id="kn" from="#fff" to="#f3f4f6"><path d="M0 20h60M0 38h60M16 0v60M44 0v60" stroke="#d3e3f2" /><path d="M15 7 H45 L48 24 H12Z" fill="#e9f3fc" stroke="#2d93e6" strokeWidth="3" /><circle cx="30" cy="16" r="5.500" fill="#5ac15a" /><path d="M30 16 V10.500 A5.500 5.500 0 0 1 35.500 16Z" fill="#e8453c" /><path d="M30 16 V10.500 A5.500 5.500 0 0 0 24.500 16Z" fill="#2f80e8" /><path d="M30 26 V52" stroke="#8b9aa8" strokeWidth="3" /><path d="M20 53h20" stroke="#5d6770" strokeWidth="2.500" /></Tile>) },
  { name: "Pages", icon: (
    <Tile id="pa" from="#fff" to="#f5f1ec"><path d="M0 22h60M0 30h60M0 38h60M0 46h60" stroke="#f3dcc6" /><text x="6" y="38" fontSize="38" fontFamily="Liberation Serif" fontWeight="700" fill="#ee9433">“</text><path d="M46 6 L26 40" stroke="#f09a38" strokeWidth="6.500" strokeLinecap="round" /><path d="M27 37 L21 47" stroke="#47494c" strokeWidth="6" /><path d="M21 46 L18 54" stroke="#9a9ca0" strokeWidth="2.400" /></Tile>) },
  { name: "App Store", icon: <Tile id="as" from="#4fb6f2" to="#2459d4"><A /></Tile> },
  { name: "Settings", icon: (
    <Tile id="se" from="#d5e0e8" to="#7e7e7a"><circle cx="30" cy="30" r="26" fill="#333536" /><circle cx="30" cy="30" r="23" fill="none" stroke="#85898b" strokeWidth="3" strokeDasharray="1.500 1.300" /><circle cx="30" cy="30" r="18" fill="none" stroke="#909496" strokeWidth="3.500" /><circle cx="30" cy="30" r="6" fill="#2a2c2d" stroke="#909496" strokeWidth="3" /><path d="M36 30H47 M27 25L21 16 M27 35L21 45" stroke="#909496" strokeWidth="3.500" /></Tile>) },
  { name: "Chrome", run: true, icon: (
    <Tile id="ch" from="#fff" to="#ededed"><circle cx="30" cy="30" r="25" fill="#f6cb4b" /><path d="M8.500 17.500 A25 25 0 0 1 51.700 17.500 L30 18 L19.500 36Z" fill="#d0453b" /><path d="M8.500 17.500 A25 25 0 0 0 30 55 L41 36 L30 42 L19.500 36Z" fill="#3f9b52" /><circle cx="30" cy="30" r="12" fill="#fff" /><circle cx="30" cy="30" r="9.500" fill="#4e86ee" /></Tile>) },
  { name: "Android Studio", icon: (
    <svg viewBox="0 0 60 60" className="size-[60px] overflow-visible"><circle cx="30" cy="28" r="29.500" fill="#74df8f" /><path d="M26 36 L9 60 M34 36 L51 60" stroke="#dbe7f0" strokeWidth="5" /><path d="M14 42 Q34 54 50 30" fill="none" stroke="#dbe7f0" strokeWidth="4.500" /><path d="M27 9h6v4l5 3v16l-8 5-8-5V16l5-3z" fill="#1d3a4a" /><circle cx="30" cy="23" r="4" fill="#74df8f" /></svg>) },
  { name: "VS Code", run: true, icon: (
    <Tile id="vs" from="#fff" to="#f3f3f3"><path d="M9 23 L13 20 L42 43 V52Z" fill="#2b72b8" /><path d="M9 38 L13 41 L42 17 V8Z" fill="#2560a4" /><path d="M39 9 L51 14 V46 L39 51Z" fill="#3c9be0" /></Tile>) },
  { name: "Terminal", icon: (
    <Tile id="te" from="#b9c6c8" to="#8d9698"><rect x="1.500" y="1.500" width="57" height="57" rx="13" fill="#050505" /><rect x="5" y="5" width="50" height="50" rx="10" fill="#2a2a2a" /><path d="M9 10 L14 14.500 L9 19 M18 22.500h9" stroke="#fff" strokeWidth="2" fill="none" /></Tile>) },
  { name: "Xcode", icon: (
    <Tile id="xc" from="#49b0ee" to="#2a66dd"><rect x="4" y="4" width="52" height="52" rx="10" fill="none" stroke="#8ac8f5" /><A c="#8ccaf6" w={4} /><path d="M44 12 L24 61" stroke="#33363b" strokeWidth="7" strokeLinecap="round" /><path d="M45 10 L36 34" stroke="#777c82" strokeWidth="4.500" /><path d="M35 -4 Q50 -10 57 3 L64 1 L67 10 L60 12 L53 8 L42 14 L44 4 Q41 -2 35 -4Z" fill="#4b4f55" /></Tile>) },
  { name: "TeamViewer", run: true, icon: (
    <Tile id="tm" from="#3f92ef" to="#3b86e6"><circle cx="30" cy="30" r="25" fill="#fff" /><path d="M8 30 L21 21.500 V27 H39 V21.500 L52 30 L39 38.500 V33 H21 V38.500Z" fill="#3b8eee" /></Tile>) },
  { name: "Simulator", run: true, icon: (
    <Tile id="si" from="#49b0ee" to="#2a66dd"><rect x="4" y="4" width="52" height="52" rx="10" fill="none" stroke="#8ac8f5" /><A c="#8ccaf6" w={4} /><rect x="33" y="16" width="20" height="45" rx="2.500" fill="#141416" transform="rotate(24 43 38)" /><path d="M32 42 L50 37 M42 33 L47 47" stroke="#c9cbd0" strokeWidth="4" /></Tile>) },
  { name: "Notion", icon: (
    <svg viewBox="0 0 60 60" className="size-[60px] overflow-visible"><path d="M2 3 L42 -1 L59 11 V57 L14 61 L1 46Z" fill="#111" stroke="#fff" strokeWidth="2" strokeLinejoin="round" /><path d="M6 5 L41 2 L52 10 L15 13Z" fill="#fff" /><path d="M14 17 L56 14 V54 L14 57.500Z" fill="#fff" /><text x="19" y="49" fontSize="38" fontFamily="Liberation Serif" fontWeight="700" fill="#111" stroke="#111" textLength="31" lengthAdjust="spacingAndGlyphs">N</text></svg>) },
];

const RIGHT_APPS: { name: string; icon: React.ReactElement }[] = [
  { name: "BitTorrent", icon: <BitSwirl bg="#e4dcf6" fg="#775cb4" className="size-[72px] shrink-0" /> },
  { name: "Word", icon: (
    <Tile id="wo" from="#fff" to="#fff"><path d="M16 10h34v10H16z" fill="#54a4ea" /><path d="M16 20h34v10H16z" fill="#3b7cd4" /><path d="M16 30h34v10H16z" fill="#2b5fbf" /><path d="M16 40h34v9.500H16z" fill="#21489a" /><rect x="5" y="19" width="22" height="22" rx="2" fill="#2355b0" /><text x="16" y="36" fontSize="16" textAnchor="middle" fontFamily="Inter" fontWeight="700" fill="#fff">W</text></Tile>) },
  { name: "Excel", icon: (
    <Tile id="ex" from="#fff" to="#fff"><path d="M16 10h17v10H16z" fill="#4ba36c" /><path d="M33 10h17v10H33z" fill="#62c28c" /><path d="M16 20h17v10H16z" fill="#37774c" /><path d="M33 20h17v10H33z" fill="#4ba36c" /><path d="M16 30h17v10H16z" fill="#2c5f3d" /><path d="M33 30h17v10H33z" fill="#3a7d50" /><path d="M16 40h34v9.500H16z" fill="#2f5f40" /><rect x="5" y="19" width="22" height="22" rx="2" fill="#31734a" /><text x="16" y="36" fontSize="16" textAnchor="middle" fontFamily="Inter" fontWeight="700" fill="#fff">X</text></Tile>) },
  { name: "Termius", icon: (
    <Tile id="tr" from="#1c2250" to="#070a1c"><path d="M22 17 q8-8 16 0 q5 1 6 8 q6 6 1 11 q-2 6-7 6 q-8 7-15 0 q-6-1-8-7 q-7-5-2-11 q2-6 9-7z" fill="none" stroke="#f2f2f6" strokeWidth="2.600" /><path d="M24 26 L28 29 L24 31.500 M30 32.500h5" stroke="#f2f2f6" strokeWidth="2" fill="none" /></Tile>) },
  { name: "Preview", icon: (
    <Tile id="pr" from="#f3f1ee" to="#dedad5"><rect x="5" y="5" width="50" height="50" rx="9" fill="#8fb0e8" /><path d="M5 32h50v14q0 9-9 9H14q-9 0-9-9z" fill="#2c4a86" /><path d="M5 42 Q20 38 30 46 L28 55 H14 Q5 55 5 46Z" fill="#c9cdd6" /><path d="M10 48q8-3 14 2l-2 5h-8z" fill="#8d7660" /><path d="M33 40 H54 L61 58 Q61 62 57 62 H31 Q26 62 26 58Z" fill="#d9dde2" opacity=".92" /><path d="M38 46l8 3-2 7-8-2z" fill="#7d8791" /><rect x="31" y="29" width="27" height="13" rx="4" fill="#17181a" /></Tile>) },
];

const Cell = ({ run, children }: { run?: boolean; children: React.ReactNode }) => (
  <div className="flex w-[78.700px] shrink-0 flex-col items-center">
    <div className="flex h-[86px] items-center justify-center pb-[0.500px]">{children}</div>
    {run && <i className="-mt-[4px] size-2 rounded-full bg-[#bd9ca6]" />}
  </div>
);

function Dock() {
  return (
    <div className="ml-[61px] flex h-24 w-[2759px] shrink-0 rounded-[26px] border-2 border-[#553a40] bg-[linear-gradient(180deg,#28131a,#371519)] pl-[3px]">
      {APPS.map((a) => <Cell key={a.name} run={a.run}>{a.icon}</Cell>)}
      <div className="flex w-[36px] items-center justify-center"><i className="h-[72px] w-0.5 bg-[#6d4a50]" /></div>
      {RIGHT_APPS.map((a) => <Cell key={a.name} run>{a.icon}</Cell>)}
      <div className="flex w-[36px] items-center justify-center"><i className="h-[72px] w-0.5 bg-[#6d4a50]" /></div>
      <Cell>
        <svg viewBox="0 0 54 70" className="h-[70px] w-[54px]">
          <defs><linearGradient id="bin" x1="0" x2="1"><stop stopColor="#5f6264" /><stop offset=".4" stopColor="#929597" /><stop offset="1" stopColor="#505355" /></linearGradient></defs>
          <path d="M2 10 L10 3 L18 6 L25 1 L33 5 L41 2 L52 10 L44 18 H10Z" fill="#e8e8ea" /><path d="M12 8l6 6 4-8zM30 6l5 9 6-7z" fill="#7b7f88" /><path d="M20 9l6 6-8 1z" fill="#4fb6a8" /><path d="M34 12l7-3-2 7z" fill="#cf5a44" />
          <path d="M1 9 Q27 24 53 9 L46 64 Q27 73 9 64Z" fill="url(#bin)" opacity=".93" />
        </svg>
      </Cell>
    </div>
  );
}

export default function App() {
  return (
    <div className="relative flex h-[1800px] w-[2880px] flex-col overflow-hidden bg-[linear-gradient(180deg,#000_0,#000_1700px,#2c040c_1745px,#350610_1800px)]">
      <MenuBar />
      <div className="mt-0.5 h-[1640px] shrink-0 rounded-b-[28px] bg-[linear-gradient(90deg,#003a60_0%,#001d30_3%,#001a2b_97%,#003a60_100%)]">
        <div className="relative flex h-[1630px] flex-col overflow-hidden rounded-[20px] border-b-2 border-[#46515a]">
          <TabStrip />
          <Toolbar />
          <Page />
          <div className="pointer-events-none absolute inset-x-0 bottom-0 top-[158px] rounded-b-[20px] border-x-2 border-b-2 border-white/20" />
        </div>
      </div>
      <div className="mt-1 flex">
        <Dock />
        <span className="-mt-px pl-0.5 font-[Inter] text-[24px] font-semibold text-[#2e272a]"><Fit w={36}>.ms</Fit></span>
      </div>
    </div>
  );
}
